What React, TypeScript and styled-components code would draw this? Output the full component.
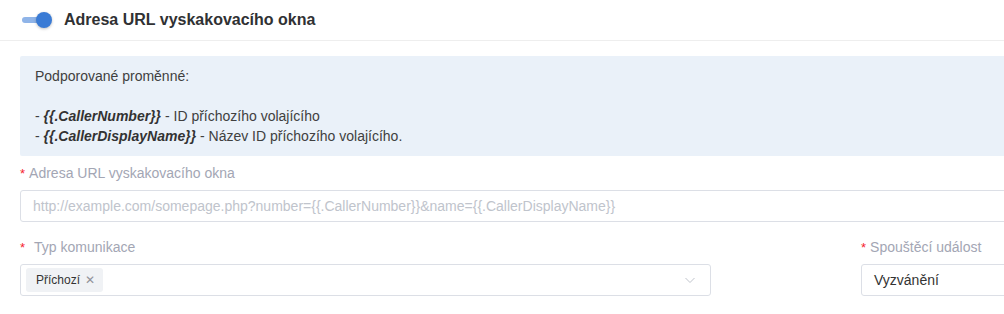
import React from "react";
import styled, { createGlobalStyle } from "styled-components";

const Global = createGlobalStyle`
  html, body { margin: 0; padding: 0; background: #fff; overflow: hidden; }
  body { font-family: "Liberation Sans", Arial, sans-serif; }
`;

const Page = styled.div`
  width: 1060px;
`;

const Header = styled.div`
  display: flex;
  align-items: center;
  gap: 12px;
  height: 41px;
  padding-left: 22px;
  border-bottom: 1px solid #eeeeee;
  box-sizing: border-box;
`;

const Switch = styled.div`
  position: relative;
  width: 30px;
  height: 18px;
  display: flex;
  align-items: center;
`;

const Track = styled.div`
  width: 26px;
  height: 6px;
  border-radius: 3px;
  background: #8fb4e8;
`;

const Knob = styled.div`
  position: absolute;
  right: 0;
  top: 1px;
  width: 16px;
  height: 16px;
  border-radius: 50%;
  background: #3a7bd5;
  box-shadow: 0 1px 3px rgba(0, 0, 0, 0.25);
`;

const Title = styled.div`
  font-size: 16px;
  font-weight: bold;
  color: #303133;
`;

const Body = styled.div`
  padding: 15px 0 0 20px;
`;

const Info = styled.div`
  background: #eaf1f9;
  border-radius: 2px;
  padding: 10px 15px 10px;
  font-size: 14px;
  line-height: 20px;
  color: #404040;
`;

const Line = styled.div<{ $gap?: boolean }>`
  margin-top: ${(p) => (p.$gap ? "20px" : "0")};
`;

const Var = styled.b`
  font-style: italic;
  color: #333;
`;

const Field = styled.div`
  display: flex;
  flex-direction: column;
`;

const Label = styled.div<{ $wide?: boolean }>`
  font-size: 14px;
  color: #a3a6b4;
  height: 34px;
  display: flex;
  align-items: center;
  gap: ${(p) => (p.$wide ? "9px" : "4px")};
`;

const Star = styled.span`
  color: #f5222d;
  font-size: 13px;
`;

const Input = styled.div`
  height: 32px;
  box-sizing: border-box;
  border: 1px solid #dcdfe6;
  border-radius: 3px;
  display: flex;
  align-items: center;
  padding: 0 12px;
  font-size: 14px;
  color: #c0c4cc;
`;

const Row = styled.div`
  display: grid;
  grid-template-columns: 691px 1fr;
  column-gap: 150px;
  margin-top: 8px;
`;

const Select = styled.div<{ $pad?: string }>`
  height: 32px;
  box-sizing: border-box;
  border: 1px solid #dcdfe6;
  border-radius: 3px;
  display: flex;
  align-items: center;
  justify-content: space-between;
  padding: ${(p) => p.$pad || "0 12px"};
  font-size: 14px;
  color: #333;
`;

const Tag = styled.div`
  height: 24px;
  box-sizing: border-box;
  background: #f0f2f5;
  border-radius: 3px;
  display: flex;
  align-items: center;
  gap: 5px;
  padding: 0 8px 0 10px;
  font-size: 12px;
  color: #333;
`;

const Close = styled.span`
  color: #909399;
  font-size: 12px;
`;

const Chevron = styled.svg`
  width: 12px;
  height: 12px;
`;

export default function App() {
  return (
    <Page>
      <Global />
      <Header>
        <Switch>
          <Track />
          <Knob />
        </Switch>
        <Title>Adresa URL vyskakovacího okna</Title>
      </Header>
      <Body>
        <Info>
          <Line>Podporované proměnné:</Line>
          <Line $gap>
            - <Var>{"{{.CallerNumber}}"}</Var> - ID příchozího volajícího
          </Line>
          <Line>
            - <Var>{"{{.CallerDisplayName}}"}</Var> - Název ID příchozího volajícího.
          </Line>
        </Info>
        <Field>
          <Label>
            <Star>*</Star>Adresa URL vyskakovacího okna
          </Label>
          <Input>
            {"http://example.com/somepage.php?number={{.CallerNumber}}&name={{.CallerDisplayName}}"}
          </Input>
        </Field>
        <Row>
          <Field>
            <Label $wide>
              <Star>*</Star>Typ komunikace
            </Label>
            <Select $pad="0 14px 0 5px">
              <Tag>
                Příchozí<Close>✕</Close>
              </Tag>
              <Chevron viewBox="0 0 12 12">
                <path d="M1.5 4 L6 8.5 L10.5 4" fill="none" stroke="#c0c4cc" strokeWidth="1" />
              </Chevron>
            </Select>
          </Field>
          <Field>
            <Label>
              <Star>*</Star>Spouštěcí událost
            </Label>
            <Select>Vyzvánění</Select>
          </Field>
        </Row>
      </Body>
    </Page>
  );
}
